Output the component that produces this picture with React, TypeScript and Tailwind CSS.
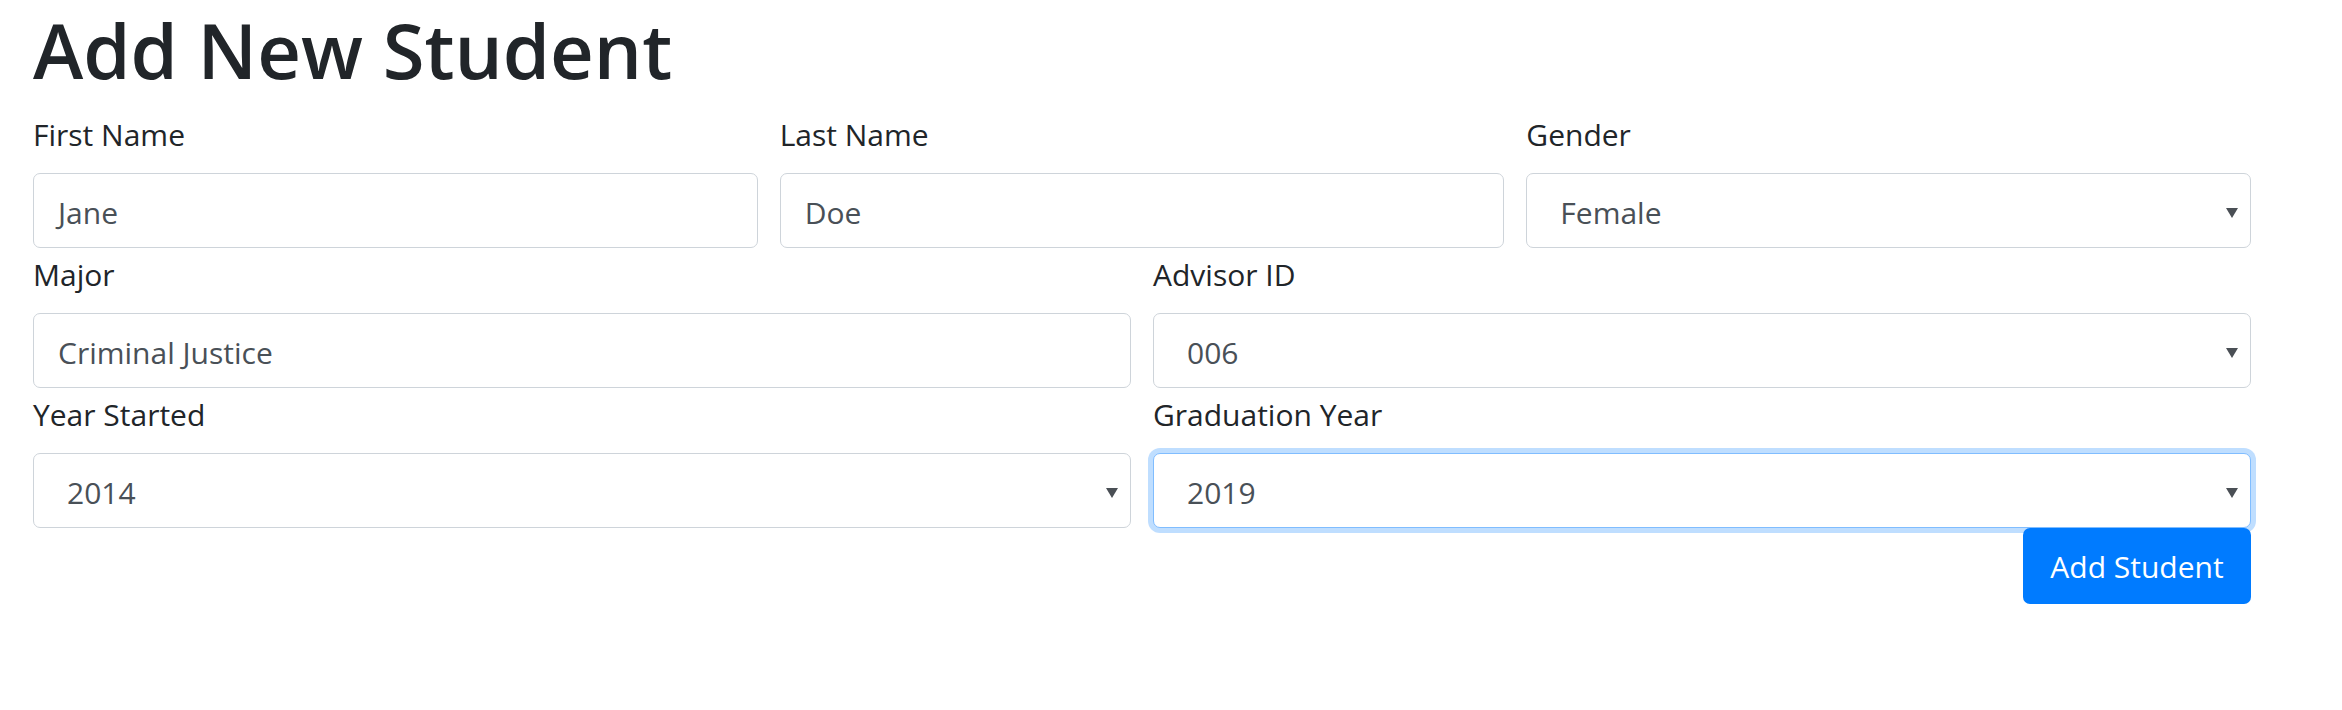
import React from 'react';

const font = { fontFamily: '"Open Sans", "Liberation Sans", sans-serif' };

interface FieldProps {
  label: string;
  value: string;
  select?: boolean;
  focused?: boolean;
}

function Caret() {
  return (
    <svg width="12" height="10" viewBox="0 0 12 10" className="shrink-0">
      <path d="M0 0 L12 0 L6 10 Z" fill="#4a4f55" />
    </svg>
  );
}

function Field({ label, value, select, focused }: FieldProps) {
  return (
    <div className="flex flex-col">
      <label className="text-[30px] leading-[45px] text-[#212529] mb-[16px]">{label}</label>
      <div
        className={`h-[75px] flex items-center bg-white border rounded-[7px] text-[30px] text-[#495057] pt-[4px] ${
          select ? 'pl-[33px] pr-[12px]' : 'pl-[24px] pr-[24px]'
        } ${
          focused
            ? 'border-[#80bdff] shadow-[0_0_0_5px_rgba(0,123,255,0.25)]'
            : 'border-[#ced4da]'
        }`}
      >
        <span className="flex-1">{value}</span>
        {select && <Caret />}
      </div>
    </div>
  );
}

export default function App() {
  return (
    <div className="min-h-screen bg-white pl-[33px] pr-[91px]" style={font}>
      <h1 className="text-[76px] leading-[100px] font-semibold text-[#212529]">Add New Student</h1>

      <div className="mt-[12px] flex flex-col gap-[4px]">
        {/* Row 1 */}
        <div className="grid grid-cols-3 gap-x-[22px]">
          <Field label="First Name" value="Jane" />
          <Field label="Last Name" value="Doe" />
          <Field label="Gender" value="Female" select />
        </div>

        {/* Row 2 */}
        <div className="grid grid-cols-2 gap-x-[22px]">
          <Field label="Major" value="Criminal Justice" />
          <Field label="Advisor ID" value="006" select />
        </div>

        {/* Row 3 */}
        <div className="grid grid-cols-2 gap-x-[22px]">
          <Field label="Year Started" value="2014" select />
          <Field label="Graduation Year" value="2019" select focused />
        </div>
      </div>

      <div className="flex justify-end">
        <button className="w-[228px] h-[76px] bg-[#007bff] text-white text-[30px] rounded-[7px]">
          Add Student
        </button>
      </div>
    </div>
  );
}
